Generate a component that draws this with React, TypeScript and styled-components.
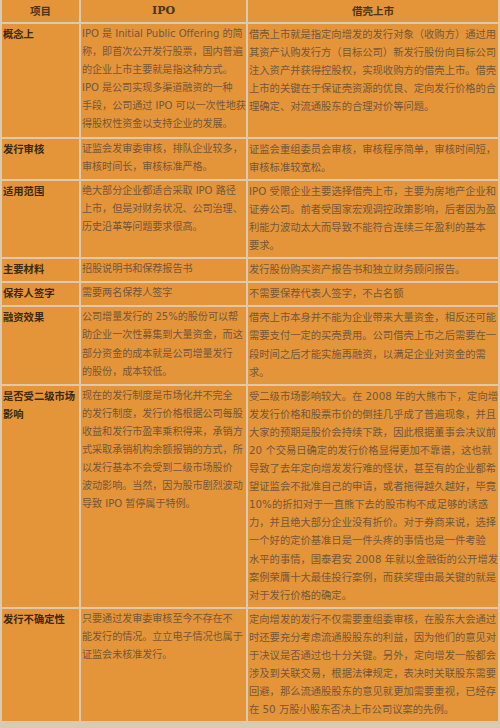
import React from "react";
import styled, { createGlobalStyle } from "styled-components";

type RowData = {
  label: string;
  ipo: string[];
  shell: string[];
};

const rows: RowData[] = [
  {
    label: "概念上",
    ipo: [
      "IPO 是 Initial Public Offering 的简",
      "称，即首次公开发行股票，国内普遍",
      "的企业上市主要就是指这种方式。",
      "IPO 是公司实现多渠道融资的一种",
      "手段，公司通过 IPO 可以一次性地获",
      "得股权性资金以支持企业的发展。",
    ],
    shell: [
      "借壳上市就是指定向增发的发行对象（收购方）通过用",
      "其资产认购发行方（目标公司）新发行股份向目标公司",
      "注入资产并获得控股权，实现收购方的借壳上市。借壳",
      "上市的关键在于保证壳资源的优良、定向发行价格的合",
      "理确定、对流通股东的合理对价等问题。",
    ],
  },
  {
    label: "发行审核",
    ipo: ["证监会发审委审核，排队企业较多，", "审核时间长，审核标准严格。"],
    shell: ["证监会重组委员会审核，审核程序简单，审核时间短，", "审核标准较宽松。"],
  },
  {
    label: "适用范围",
    ipo: [
      "绝大部分企业都适合采取 IPO 路径",
      "上市，但是对财务状况、公司治理、",
      "历史沿革等问题要求很高。",
    ],
    shell: [
      "IPO 受限企业主要选择借壳上市，主要为房地产企业和",
      "证券公司。前者受国家宏观调控政策影响，后者因为盈",
      "利能力波动太大而导致不能符合连续三年盈利的基本",
      "要求。",
    ],
  },
  {
    label: "主要材料",
    ipo: ["招股说明书和保荐报告书"],
    shell: ["发行股份购买资产报告书和独立财务顾问报告。"],
  },
  {
    label: "保荐人签字",
    ipo: ["需要两名保荐人签字"],
    shell: ["不需要保荐代表人签字，不占名额"],
  },
  {
    label: "融资效果",
    ipo: [
      "公司增量发行的 25%的股份可以帮",
      "助企业一次性募集到大量资金，而这",
      "部分资金的成本就是公司增量发行",
      "的股份，成本较低。",
    ],
    shell: [
      "借壳上市本身并不能为企业带来大量资金，相反还可能",
      "需要支付一定的买壳费用。公司借壳上市之后需要在一",
      "段时间之后才能实施再融资，以满足企业对资金的需",
      "求。",
    ],
  },
  {
    label: "是否受二级市场\n影响",
    ipo: [
      "现在的发行制度是市场化并不完全",
      "的发行制度，发行价格根据公司每股",
      "收益和发行市盈率乘积得来，承销方",
      "式采取承销机构余额报销的方式，所",
      "以发行基本不会受到二级市场股价",
      "波动影响。当然，因为股市剧烈波动",
      "导致 IPO 暂停属于特例。",
    ],
    shell: [
      "受二级市场影响较大。在 2008 年的大熊市下，定向增",
      "发发行价格和股票市价的倒挂几乎成了普遍现象，并且",
      "大家的预期是股价会持续下跌，因此根据董事会决议前",
      "20 个交易日确定的发行价格显得更加不靠谱，这也就",
      "导致了去年定向增发发行难的怪状，甚至有的企业都希",
      "望证监会不批准自己的申请，或者拖得越久越好，毕竟",
      "10%的折扣对于一直熊下去的股市构不成足够的诱惑",
      "力，并且绝大部分企业没有折价。对于券商来说，选择",
      "一个好的定价基准日是一件头疼的事情也是一件考验",
      "水平的事情，国泰君安 2008 年就以金融街的公开增发",
      "案例荣膺十大最佳投行案例，而获奖理由最关键的就是",
      "对于发行价格的确定。",
    ],
  },
  {
    label: "发行不确定性",
    ipo: [
      "只要通过发审委审核至今不存在不",
      "能发行的情况。立立电子情况也属于",
      "证监会未核准发行。",
    ],
    shell: [
      "定向增发的发行不仅需要重组委审核，在股东大会通过",
      "时还要充分考虑流通股股东的利益，因为他们的意见对",
      "于决议是否通过也十分关键。另外，定向增发一般都会",
      "涉及到关联交易，根据法律规定，表决时关联股东需要",
      "回避，那么流通股股东的意见就更加需要重视，已经存",
      "在 50 万股小股东否决上市公司议案的先例。",
    ],
  },
];

const App: React.FC = () => {
  return (
    <>
      <GlobalStyle />
      <Table>
        <Row>
          <HeadCell>项目</HeadCell>
          <HeadCell $latin>IPO</HeadCell>
          <HeadCell>借壳上市</HeadCell>
        </Row>
        {rows.map((row) => (
          <Row key={row.label}>
            <LabelCell>{row.label}</LabelCell>
            <TextCell $narrow>{row.ipo.join("\n")}</TextCell>
            <TextCell>{row.shell.join("\n")}</TextCell>
          </Row>
        ))}
      </Table>
    </>
  );
};

export default App;

const GlobalStyle = createGlobalStyle`
  html, body {
    margin: 0;
    padding: 0;
    background: #e6d5bb;
  }
`;

const Table = styled.div`
  width: 500px;
  height: 728px;
  box-sizing: border-box;
  display: flex;
  flex-direction: column;
  gap: 2px;
  padding: 0 2px 4px 2px;
  background: #dccab0;
  overflow: hidden;
`;

const Row = styled.div`
  display: grid;
  grid-template-columns: 77px 165px 250px;
  column-gap: 2px;
`;

const Cell = styled.div`
  background: #e4953a;
  box-sizing: border-box;
  padding: 1px 1px 3px 1px;
  line-height: 18.1px;
  white-space: pre;
`;

const HeadCell = styled(Cell)<{ $latin?: boolean }>`
  height: 22px;
  padding: 0;
  display: flex;
  align-items: center;
  justify-content: center;
  font-family: ${(p) =>
    p.$latin
      ? `"DejaVu Serif", "Noto Sans CJK SC", serif`
      : `"Noto Sans CJK SC", sans-serif`};
  font-weight: 700;
  font-size: ${(p) => (p.$latin ? "11px" : "10.5px")};
  color: #4a3418;
`;

const LabelCell = styled(Cell)`
  font-family: "Noto Sans CJK SC", sans-serif;
  font-weight: 700;
  font-size: 10.3px;
  color: #3a2810;
`;

const TextCell = styled(Cell)<{ $narrow?: boolean }>`
  font-family: "DejaVu Sans", "Noto Sans CJK SC", sans-serif;
  font-size: ${(p) => (p.$narrow ? "10.1px" : "10.3px")};
  letter-spacing: ${(p) => (p.$narrow ? "-0.05px" : "0")};
  color: #73573a;
`;
